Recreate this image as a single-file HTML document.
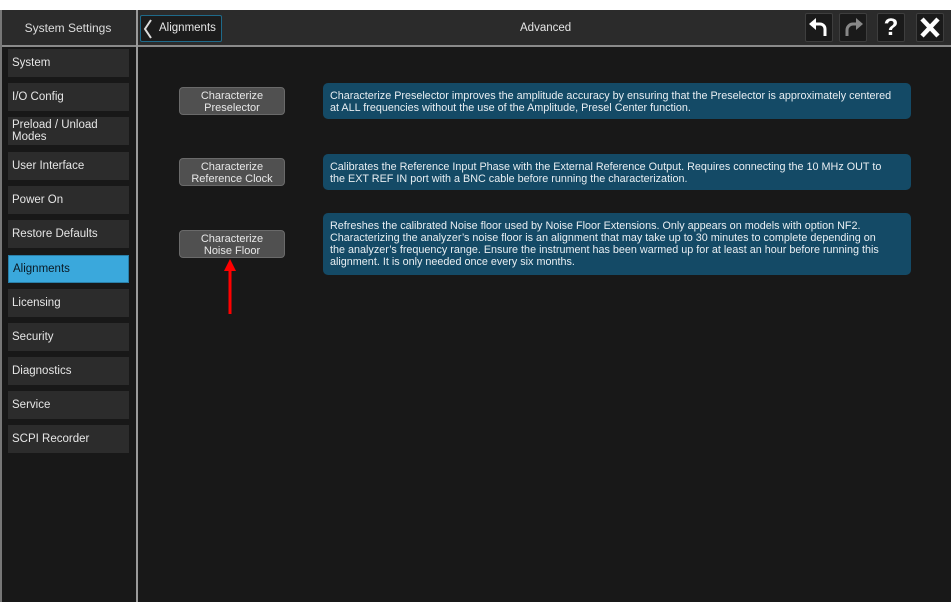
<!DOCTYPE html>
<html><head><meta charset="utf-8"><style>
*{margin:0;padding:0;box-sizing:border-box}
body{width:951px;height:602px;background:#fff;font-family:"Liberation Sans",sans-serif;position:relative;overflow:hidden}
.abs{position:absolute}
#hdr{left:0;top:10px;width:951px;height:37px;background:#2b2b2b;border-bottom:2px solid #8a8a8a}
#main{left:0;top:47px;width:951px;height:555px;background:#181818}
#lb{left:0;top:10px;width:2px;height:592px;background:#777}
#div{left:136px;top:10px;width:2px;height:592px;background:#9a9a9a}
.si{position:absolute;left:8px;width:121px;height:28px;background:#2c2c2c;color:#e6e6e6;font-size:11.5px;padding-left:4px;display:flex;align-items:center;line-height:12px}
.si.a{background:#3aa8dc;color:#0a1a25}
.btn{position:absolute;left:179px;width:106px;height:28px;background:#505050;border:1px solid #6a6a6a;border-radius:4px;color:#e8e8e8;font-size:11px;text-align:center;line-height:12px;padding-top:2px}
.desc{position:absolute;left:323px;width:588px;background:#144a66;border-radius:5px;color:#e8eef2;font-size:10.8px;line-height:12px;padding:7px 7px 6px 7px;white-space:nowrap;overflow:hidden}
.ib{position:absolute;top:13px;width:28px;height:29px;background:#1a1a1a;border:1px solid #3e3e3e;border-radius:2px}
</style></head><body>
<div id="hdr" class="abs"></div>
<div id="main" class="abs"></div>
<div id="lb" class="abs"></div>
<div id="div" class="abs"></div>
<div class="abs" style="left:0;top:10px;width:136px;height:37px;color:#ddd;font-size:12px;text-align:center;line-height:37px">System Settings</div>
<div class="abs" style="left:140px;top:15px;width:82px;height:27px;border:1px solid #1f6a8a;border-radius:2px;background:#1c1c1c"></div>
<svg class="abs" style="left:142px;top:18px" width="12" height="22"><path d="M9 2 L3 11 L9 20" stroke="#ddd" stroke-width="2" fill="none"/></svg>
<div class="abs" style="left:159px;top:15px;line-height:27px;color:#e6e6e6;font-size:11.5px">Alignments</div>
<div class="abs" style="left:520px;top:10px;line-height:37px;color:#e6e6e6;font-size:11.5px">Advanced</div>
<div class="ib" style="left:805px"></div>
<div class="ib" style="left:839px"></div>
<div class="ib" style="left:877px"></div>
<div class="ib" style="left:916px"></div>
<svg class="abs" style="left:805px;top:13px" width="29" height="29"><path d="M20 23 V16 a5 5 0 0 0 -5 -5 H8" stroke="#fff" stroke-width="3" fill="none"/><path d="M4 11 L11 5 L11 17 Z" fill="#fff"/></svg>
<svg class="abs" style="left:839px;top:13px" width="29" height="29"><path d="M8 23 V17 a6 6 0 0 1 6 -6 H19" stroke="#888" stroke-width="3" fill="none"/><path d="M24 11 L17 5 L17 17 Z" fill="#888"/></svg>
<div class="abs" style="left:877px;top:13px;width:28px;line-height:29px;text-align:center;color:#fff;font-size:24px;font-weight:bold">?</div>
<svg class="abs" style="left:916px;top:13px" width="29" height="29"><path d="M6 6 L22 23 M22 6 L6 23" stroke="#fff" stroke-width="4.5"/></svg>

<div class="si" style="top:49px">System</div>
<div class="si" style="top:83px">I/O Config</div>
<div class="si" style="top:117px">Preload / Unload<br>Modes</div>
<div class="si" style="top:152px">User Interface</div>
<div class="si" style="top:186px">Power On</div>
<div class="si" style="top:220px">Restore Defaults</div>
<div class="si a" style="top:255px;border:1px solid #2a7fa8">Alignments</div>
<div class="si" style="top:289px">Licensing</div>
<div class="si" style="top:323px">Security</div>
<div class="si" style="top:357px">Diagnostics</div>
<div class="si" style="top:391px">Service</div>
<div class="si" style="top:425px">SCPI Recorder</div>

<div class="btn" style="top:87px">Characterize<br>Preselector</div>
<div class="btn" style="top:158px">Characterize<br>Reference Clock</div>
<div class="btn" style="top:230px">Characterize<br>Noise Floor</div>
<svg class="abs" style="left:222px;top:258px" width="16" height="58"><path d="M8 10 V56" stroke="#f00" stroke-width="3"/><path d="M2 13 L8 1 L14 13 Z" fill="#f00"/></svg>

<div class="desc" style="top:83px;height:36px">Characterize Preselector improves the amplitude accuracy by ensuring that the Preselector is approximately centered<br>at ALL frequencies without the use of the Amplitude, Presel Center function.</div>
<div class="desc" style="top:154px;height:36px">Calibrates the Reference Input Phase with the External Reference Output. Requires connecting the 10 MHz OUT to<br>the EXT REF IN port with a BNC cable before running the characterization.</div>
<div class="desc" style="top:213px;height:62px">Refreshes the calibrated Noise floor used by Noise Floor Extensions. Only appears on models with option NF2.<br>Characterizing the analyzer’s noise floor is an alignment that may take up to 30 minutes to complete depending on<br>the analyzer’s frequency range. Ensure the instrument has been warmed up for at least an hour before running this<br>alignment. It is only needed once every six months.</div>
</body></html>
